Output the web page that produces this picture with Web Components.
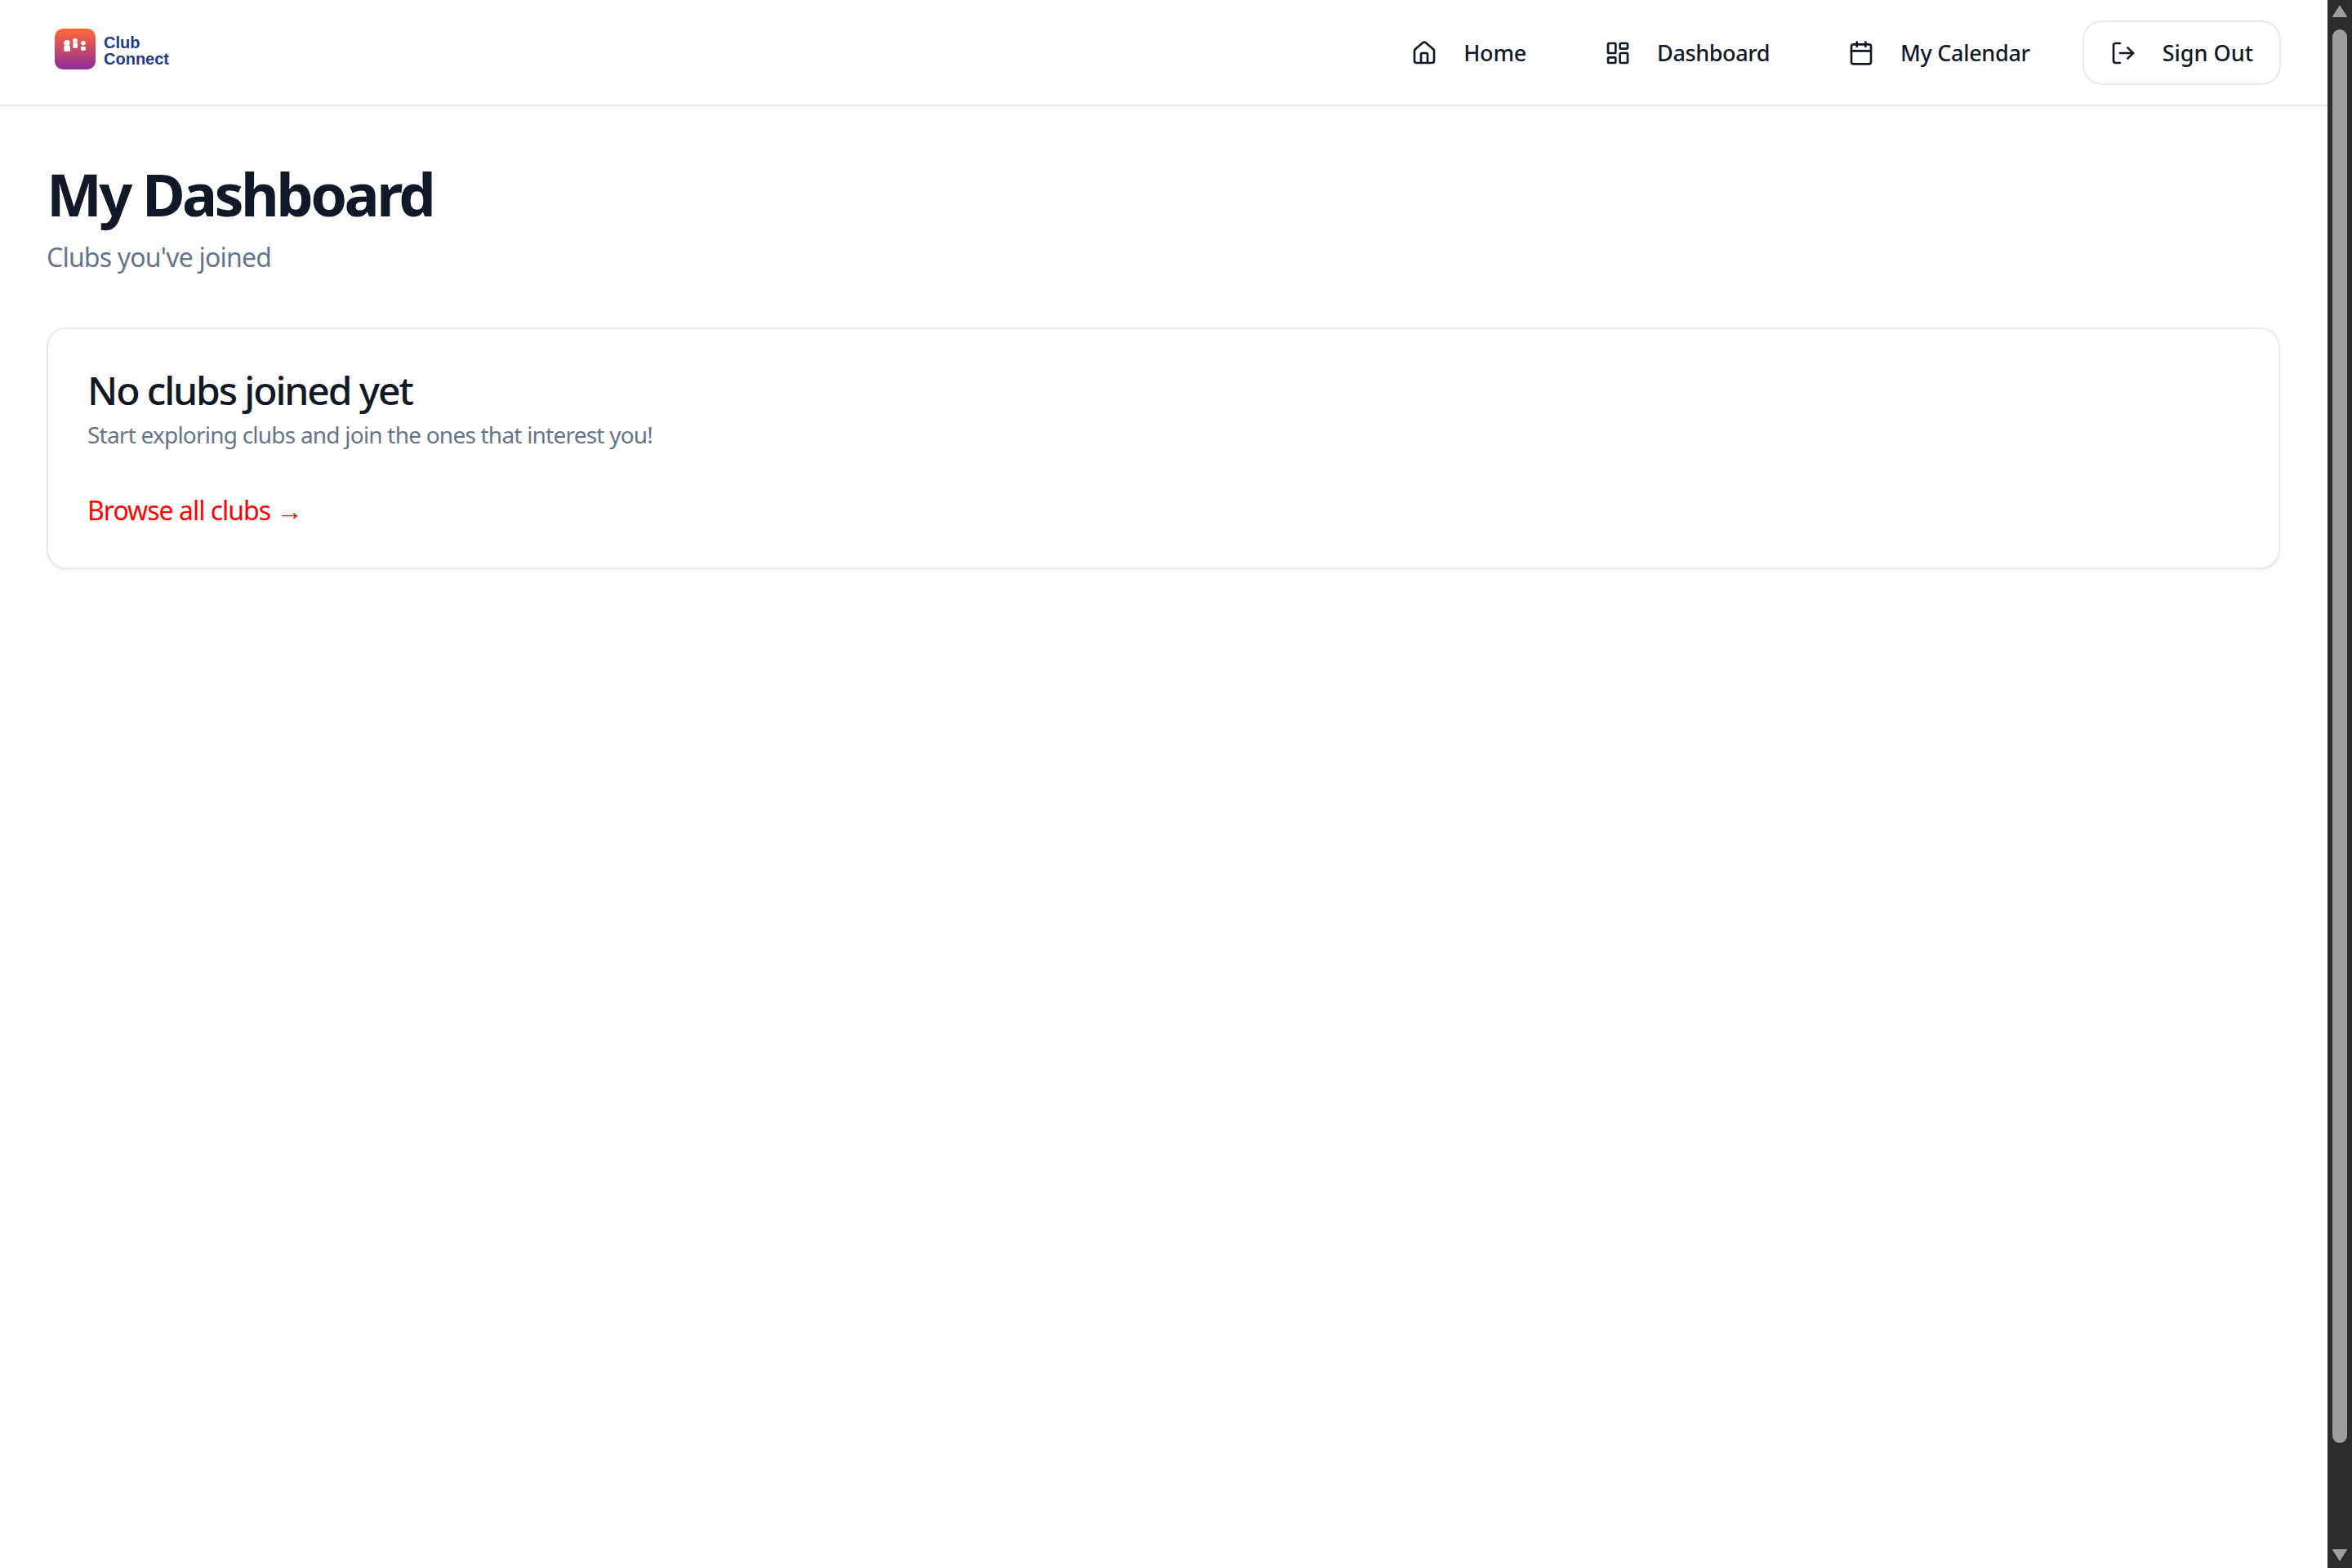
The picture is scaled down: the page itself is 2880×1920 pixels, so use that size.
<!DOCTYPE html>
<html><head><meta charset="utf-8"><style>
html,body{margin:0;height:100%;overflow:hidden;background:#fff}
body{font-family:"Noto Sans","Open Sans",sans-serif;color:#111827}
</style></head><body>
<template id="t-app"><style>
:host{display:flex;height:1920px;width:2880px}
.page{flex:1;min-width:0;display:flex;flex-direction:column;background:#fff}
</style><div class="page"><slot name="header"></slot><slot></slot></div><slot name="scroll"></slot></template>

<template id="t-header"><style>
:host{display:flex;align-items:center;justify-content:space-between;height:128px;padding:0 57px 0 67px;border-bottom:2px solid #efe7e5;box-sizing:content-box}
nav{display:flex;align-items:center;gap:28px}
</style><slot name="logo"></slot><nav><slot></slot></nav></template>

<template id="t-logo"><style>
:host{display:flex;align-items:center;gap:10px;font:700 20px/20px "Liberation Sans",sans-serif;color:#1e3a8a;margin-top:-8px}
.m{width:50px;height:50px;border-radius:10px;background:linear-gradient(180deg,#ff6b35,#8e2a9c);display:block}
span{margin-top:4px}
</style><svg class="m" viewBox="0 0 50 50"><g fill="#fff"><circle cx="15" cy="17.6" r="3.7"/><rect x="11.3" y="21" width="7.7" height="7" rx=".8"/><circle cx="25" cy="15" r="2.9"/><rect x="22.3" y="17.8" width="5.7" height="6" rx=".4"/><circle cx="35" cy="17.7" r="2.7"/><rect x="32" y="22" width="5.7" height="4.8" rx=".4"/></g></svg><span><slot></slot></span></template>

<template id="t-nav"><style>
:host{display:flex;align-items:center;gap:32px;box-sizing:border-box;height:79px;padding:0 32px;border:2px solid transparent;border-radius:24px;font-size:27px;font-weight:500;color:#111827}
:host([outlined]){border-color:#efe7e5;margin-left:2px}
svg{width:32px;height:32px;fill:none;stroke:#111827;stroke-width:2;stroke-linecap:round;stroke-linejoin:round;flex:none;margin-top:1px}
</style><svg viewBox="0 0 24 24"></svg><span><slot></slot></span></template>

<template id="t-main"><style>
:host{display:block;padding:0 58px 0 57px}
h1{margin:0 0 11px;font-size:72px;font-weight:700;line-height:90px;letter-spacing:-3.6px;color:#111827;padding-top:62px}
p{margin:0;font-size:32px;line-height:44px;color:#64748b;letter-spacing:-.8px}
.s{margin-bottom:64px}
</style><h1><slot name="title"></slot></h1><p class="s"><slot name="sub"></slot></p><slot></slot></template>

<template id="t-card"><style>
:host{display:block;box-sizing:border-box;height:296px;border:2px solid #efe7e5;border-radius:24px;padding:42px 48px;box-shadow:0 2px 4px rgba(0,0,0,.05);background:#fff}
h2{margin:0 0 2px;font-size:48px;font-weight:500;line-height:66px;letter-spacing:-2.1px;color:#111827}
p{margin:0;font-size:28px;line-height:38px;color:#64748b;letter-spacing:-.78px}
a{display:block;margin-top:52px;font-size:32px;line-height:44px;color:#ff0000;letter-spacing:-1px;text-decoration:none}
</style><h2><slot name="title"></slot></h2><p><slot name="text"></slot></p><a href="#"><slot name="link"></slot></a></template>

<template id="t-scroll"><style>
:host{display:flex;flex-direction:column;align-items:center;width:30px;height:1920px;background:#2c2c2c;flex:none}
.a{width:18px;height:14px;margin-top:7px;flex:none;fill:#9e9e9e;display:block}
.th{width:18px;height:1731px;margin-top:15px;border-radius:9px;background:#9e9e9e;flex:none}
.sp{flex:1}
.d{margin:0 0 9px}
</style><svg class="a" viewBox="0 0 18 14"><path d="M9 0 18 14H0z" stroke="#9e9e9e" stroke-linejoin="round"/></svg><div class="th"></div><div class="sp"></div><svg class="a d" viewBox="0 0 18 14"><path d="M0 0H18L9 14z" stroke="#9e9e9e" stroke-linejoin="round"/></svg></template>

<club-app>
  <club-header slot="header">
    <club-logo slot="logo">Club<br>Connect</club-logo>
    <nav-item icon="home" style="letter-spacing:-.2px">Home</nav-item>
    <nav-item icon="dash" style="letter-spacing:-.4px">Dashboard</nav-item>
    <nav-item icon="cal" style="letter-spacing:-.3px">My Calendar</nav-item>
    <nav-item icon="out" outlined style="letter-spacing:0">Sign Out</nav-item>
  </club-header>
  <club-main>
    <span slot="title">My Dashboard</span>
    <span slot="sub">Clubs you've joined</span>
    <club-card>
      <span slot="title">No clubs joined yet</span>
      <span slot="text">Start exploring clubs and join the ones that interest you!</span>
      <span slot="link">Browse all clubs →</span>
    </club-card>
  </club-main>
  <club-scroll slot="scroll"></club-scroll>
</club-app>
<script>
const ICONS={
home:'<path d="M15 21v-8a1 1 0 0 0-1-1h-4a1 1 0 0 0-1 1v8"/><path d="M3 10a2 2 0 0 1 .709-1.528l7-5.999a2 2 0 0 1 2.582 0l7 5.999A2 2 0 0 1 21 10v9a2 2 0 0 1-2 2H5a2 2 0 0 1-2-2z"/>',
dash:'<rect width="7" height="9" x="3" y="3" rx="1"/><rect width="7" height="5" x="14" y="3" rx="1"/><rect width="7" height="9" x="14" y="12" rx="1"/><rect width="7" height="5" x="3" y="16" rx="1"/>',
cal:'<path d="M8 2v4"/><path d="M16 2v4"/><rect width="18" height="18" x="3" y="4" rx="2"/><path d="M3 10h18"/>',
out:'<path d="M9 21H5a2 2 0 0 1-2-2V5a2 2 0 0 1 2-2h4"/><polyline points="16 17 21 12 16 7"/><line x1="21" x2="9" y1="12" y2="12"/>'};
function def(name,tid,init){customElements.define(name,class extends HTMLElement{constructor(){super();this.attachShadow({mode:'open'}).appendChild(document.getElementById(tid).content.cloneNode(true));if(init)init(this)}})}
def('club-app','t-app');def('club-header','t-header');def('club-logo','t-logo');def('club-main','t-main');def('club-card','t-card');def('club-scroll','t-scroll');
def('nav-item','t-nav',el=>{el.shadowRoot.querySelector('svg').innerHTML=ICONS[el.getAttribute('icon')]});
</script></body></html>
